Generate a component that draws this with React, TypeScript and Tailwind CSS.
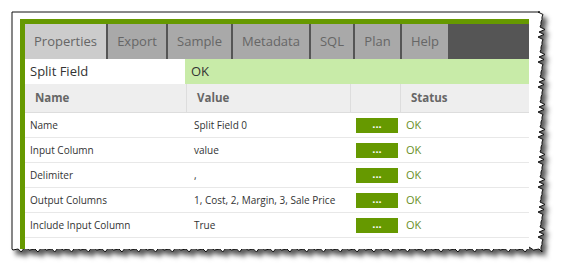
import React from "react";

function Paper() {
  const W = 530;
  const H = 239;
  const pts: string[] = [];
  pts.push(`0,0`);
  pts.push(`${W - 2},0`);
  let y = 0;
  let i = 0;
  while (y < H) {
    const x = W - 2 + ((i * 7) % 5) - (i % 2 === 0 ? 2 : -1);
    pts.push(`${x},${y}`);
    y += 2.5 + ((i * 3) % 3) * 0.7;
    i++;
  }
  pts.push(`${W},${H}`);
  let x = W;
  i = 0;
  while (x > 0) {
    const yy = H - ((i * 5) % 4) + (i % 2 === 0 ? 1 : -1);
    pts.push(`${x},${yy}`);
    x -= 3 + ((i * 7) % 4) * 0.8;
    i++;
  }
  pts.push(`0,${H - 2}`);
  return (
    <svg
      className="absolute left-0 top-0 overflow-visible"
      width={W}
      height={H}
      viewBox={`0 0 ${W} ${H}`}
    >
      <defs>
        <filter id="sh" x="-5%" y="-5%" width="115%" height="125%">
          <feDropShadow dx="4" dy="5" stdDeviation="2.6" floodColor="#000" floodOpacity="0.65" />
        </filter>
      </defs>
      <polygon points={pts.join(" ")} fill="#fff" stroke="#111" strokeWidth="1" filter="url(#sh)" />
    </svg>
  );
}

const tabs = [
  { label: "Properties", w: "w-[81px]", active: true },
  { label: "Export", w: "w-[58px]" },
  { label: "Sample", w: "w-[63px]" },
  { label: "Metadata", w: "w-[76px]" },
  { label: "SQL", w: "w-[42px]" },
  { label: "Plan", w: "w-[45px]" },
  { label: "Help", w: "w-[46px]" },
];

const rows = [
  ["Name", "Split Field 0"],
  ["Input Column", "value"],
  ["Delimiter", ","],
  ["Output Columns", "1, Cost, 2, Margin, 3, Sale Price"],
  ["Include Input Column", "True"],
];

export default function App() {
  return (
    <div
      className="w-[563px] h-[272px] bg-white pl-[12px] pt-[12px]"
      style={{ fontFamily: '"Open Sans", "Noto Sans", sans-serif' }}
    >
      <div className="relative w-[530px] h-[239px]">
        <Paper />
        <div className="relative pl-[8px] pt-[7px]">
          <div className="w-[509px] h-[230px] border-t-[5px] border-l-[5px] border-[#669900] flex flex-col">
            <div className="h-[35px] bg-[#555555] flex gap-[2px] shrink-0">
              {tabs.map((t) => (
                <div
                  key={t.label}
                  className={`${t.w} h-full flex items-center justify-center text-[13px] text-[#666] ${
                    t.active ? "bg-[#cccccc]" : "bg-[#a9a9a9]"
                  }`}
                >
                  {t.label}
                </div>
              ))}
            </div>
            <div className="h-[25px] flex shrink-0 text-[13px] text-[#333]">
              <div className="w-[160px] bg-white flex items-center pl-[5px]">Split Field</div>
              <div className="flex-1 bg-[#c8eba8] flex items-center pl-[6px]">OK</div>
            </div>
            <div className="h-[29px] flex shrink-0 bg-[#eeeeee] border-b border-[#dddddd] text-[11.5px] font-bold text-[#666]">
              <div className="w-[162px] border-r border-[#dddddd] flex items-center pl-[10px]">Name</div>
              <div className="w-[164px] border-r border-[#dddddd] flex items-center pl-[10px]">Value</div>
              <div className="w-[50px] border-r border-[#dddddd]"></div>
              <div className="flex-1 flex items-center pl-[10px]">Status</div>
            </div>
            <div className="flex-1 bg-white">
              {rows.map(([n, v]) => (
                <div key={n} className="h-[25px] flex border-b border-[#e8e8e8] text-[10px] text-[#333]">
                  <div className="w-[163px] flex items-center pl-[5px]">{n}</div>
                  <div className="w-[163px] flex items-center pl-[6px]">{v}</div>
                  <div className="w-[50px] flex items-center pl-[5px]">
                    <div className="w-[42px] h-[15px] bg-[#669900] text-white text-[11px] font-bold flex items-center justify-center leading-none pb-[4px]">
                      ...
                    </div>
                  </div>
                  <div className="flex-1 flex items-center pl-[5px] text-[11px] text-[#6a8f1f]">OK</div>
                </div>
              ))}
            </div>
          </div>
        </div>
      </div>
    </div>
  );
}
